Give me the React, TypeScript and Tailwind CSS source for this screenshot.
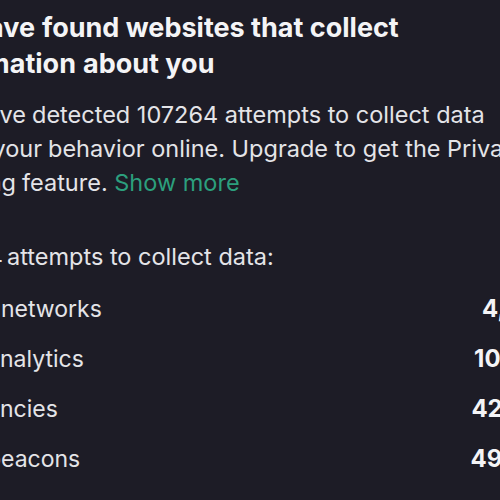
const rows = [
  { pre: 'Social ', post: 'networks', w: 'w-[1px]', count: '4,521' },
  { pre: 'Web a', post: 'nalytics', w: 'w-[0px]', count: '10,893' },
  { pre: 'Ad age', post: 'ncies', w: 'w-[0px]', count: '42,356' },
  { pre: 'Web b', post: 'eacons', w: 'w-[1px]', count: '49,494' },
]

// A line of text whose start is cut off by the panel edge: `pre` runs out to
// the left of the box, `post` starts exactly where the box ends.
function Line({ pre, post, w, gap }: { pre: string; post: React.ReactNode; w: string; gap?: string }) {
  return (
    <div className="flex whitespace-nowrap">
      <div className={`flex justify-end shrink-0 ${w}`}>
        <span className={gap}>{pre}</span>
      </div>
      <span>{post}</span>
    </div>
  )
}

export default function App() {
  return (
    <div className="w-[500px] h-[500px] overflow-hidden bg-[#1d1c26] text-[#f4f4f6]" style={{ fontFamily: 'Inter, "Noto Sans", sans-serif' }}>
      <div className="pt-[10px]">
        {/* Title */}
        <h1 className="text-[27px] leading-[36px] font-bold">
          <Line pre="We have" gap="pr-[7px]" w="w-[42px]" post="found websites that collect" />
          <Line pre="information" gap="pr-[7px]" w="w-[83px]" post="about you" />
        </h1>

        {/* Description */}
        <div className="mt-[16px] text-[23.5px] leading-[34px] text-[#e4e4e8]">
          <Line pre="We have" gap="pr-[6px]" w="w-[32px]" post="detected 107264 attempts to collect data" />
          <Line pre="about your" gap="pr-[6px]" w="w-[48px]" post="behavior online. Upgrade to get the Private" />
          <Line
            pre="Browsing"
            gap="pr-[6px]"
            w="w-[22px]"
            post={
              <>
                feature. <span className="text-[#2c9f7d]">Show more</span>
              </>
            }
          />
        </div>

        {/* List */}
        <div className="mt-[40px] text-[23.5px] leading-[34px] text-[#e4e4e8]">
          <Line pre="107264" gap="pr-[4px]" w="w-[7px]" post="attempts to collect data:" />
        </div>
        <div className="mt-[10px] flex flex-col w-[584px]">
          {rows.map((r) => (
            <div key={r.post} className="grid grid-cols-[444px_140px] items-center h-[50px] text-[23px] whitespace-nowrap">
              <div className="text-[#e4e4e8]">
                <Line pre={r.pre.trimEnd()} gap={r.pre.endsWith(' ') ? 'pr-[6px]' : undefined} w={r.w} post={r.post} />
              </div>
              <span className="text-center text-[24px] font-bold text-[#f4f4f6]">{r.count}</span>
            </div>
          ))}
        </div>
      </div>
    </div>
  )
}
